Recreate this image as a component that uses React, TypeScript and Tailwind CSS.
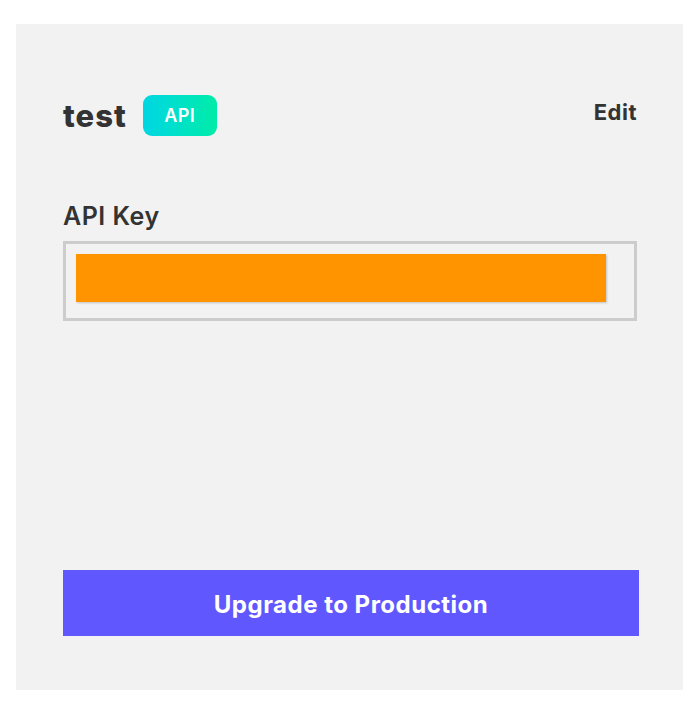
import React from "react";

export default function App() {
  return (
    <div className="w-[700px] h-[702px] bg-white pt-[24px] pl-[16px]" style={{ fontFamily: "Inter, 'Open Sans', sans-serif" }}>
      <div className="w-[667px] h-[666px] bg-[#f2f2f2] pl-[47px] pr-[46px] pt-[70px] flex flex-col">
        <div className="flex items-center justify-between h-[42px]">
          <div className="flex items-center gap-[16px]">
            <span className="text-[31px] font-extrabold text-[#333333] leading-none tracking-[1px]">test</span>
            <span className="h-[41px] w-[74px] rounded-[9px] bg-gradient-to-r from-[#00d6e2] to-[#00eca8] flex items-center justify-center text-white text-[18px] font-semibold tracking-[0.5px]">API</span>
          </div>
          <span className="text-[22px] font-bold text-[#333333] -mt-[6px] tracking-[0.5px]">Edit</span>
        </div>
        <div className="mt-[68px] text-[25px] font-semibold text-[#333333] leading-none tracking-[0.5px]">API Key</div>
        <div className="mt-[12px] h-[80px] border-[3px] border-[#cccccc] bg-[#f2f2f2] pl-[10px] pr-[28px] pt-[10px]">
          <div className="h-[48px] bg-[#ff9400] shadow-[1px_1px_2px_rgba(0,0,0,0.2)]" />
        </div>
        <div className="flex-1" />
        <button className="h-[66px] w-[576px] bg-[#6157ff] text-white text-[24px] font-bold tracking-[0.5px] pt-[4px] mb-[54px]">Upgrade to Production</button>
      </div>
    </div>
  );
}
